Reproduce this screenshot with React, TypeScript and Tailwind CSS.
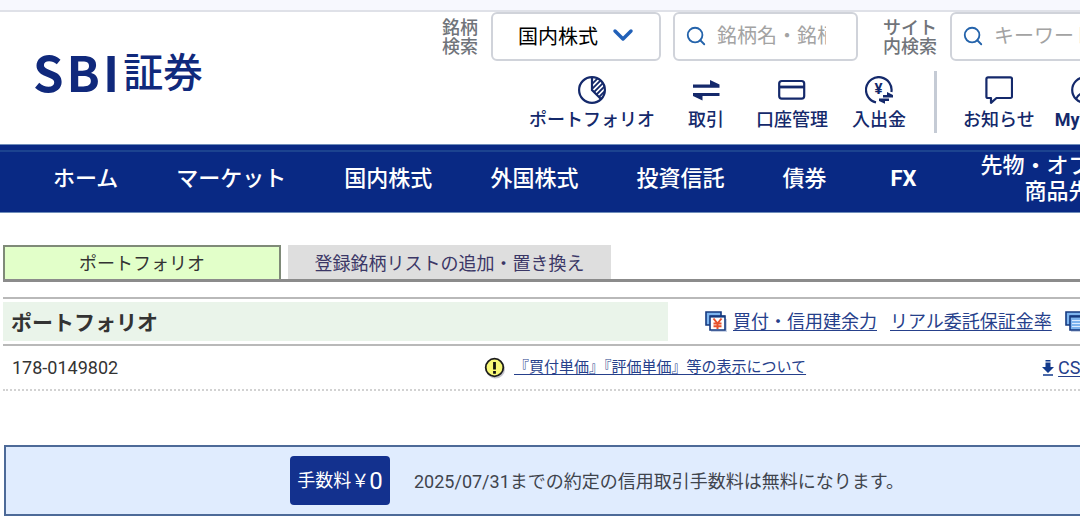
import type { ReactNode } from 'react'
import { ChevronDown, Search } from 'lucide-react'

function PieIcon() {
  return (
    <svg className="size-7" viewBox="0 0 28 28" fill="none" stroke="currentColor" strokeWidth="2.2">
      <clipPath id="wedge">
        <path d="M14 14V1a13 13 0 0 1 9.2 22.2z" />
      </clipPath>
      <circle cx="14" cy="14" r="12.9" />
      <path d="M14 1v13l9.2 9.2" />
      <g clipPath="url(#wedge)" strokeWidth="1.8">
        <path d="M12 10 23-1M12 15 26 1M14 18 30 2M17 20 31 6M19 23 33 9" />
      </g>
    </svg>
  )
}

function TradeIcon() {
  return (
    <svg className="size-7" viewBox="0 0 28 28" fill="currentColor">
      <path d="M1 8.500h17V4l9.500 4.500v3.200H1z" />
      <path d="M27.500 20.100h-17v4.500L1 20.100v-3.200h26.500z" />
    </svg>
  )
}

function CardIcon() {
  return (
    <svg className="size-7" viewBox="0 0 28 28" fill="none" stroke="currentColor" strokeWidth="2.2">
      <rect x="1.2" y="5" width="25" height="17.6" rx="2.6" />
      <path d="M1 11h25" strokeWidth="2.8" />
    </svg>
  )
}

function CashIcon() {
  return (
    <svg className="size-7" viewBox="0 0 28 28" fill="none" stroke="currentColor" strokeWidth="2.2">
      <path d="M26.4 16A12.8 12.8 0 1 0 11 26.4" />
      <text
        x="13.6"
        y="18.4"
        textAnchor="middle"
        fontSize="15"
        fontWeight="700"
        fill="currentColor"
        stroke="none"
      >
        ¥
      </text>
      <path d="M18 19h4v-3l6 3v2.400H18zM24 25h-4v2.800L14 25v-2.400h10z" fill="currentColor" stroke="none" />
    </svg>
  )
}

function MessageIcon() {
  return (
    <svg className="size-7" viewBox="0 0 28 28" fill="none" stroke="currentColor" strokeWidth="2.2" strokeLinejoin="round">
      <path d="M3 1.400h22.400a1.600 1.600 0 0 1 1.600 1.600v17.400a1.600 1.600 0 0 1-1.600 1.600H11.500L6 26.800V22H3a1.600 1.600 0 0 1-1.600-1.600V3A1.600 1.600 0 0 1 3 1.400z" />
    </svg>
  )
}

function UserIcon() {
  return (
    <svg className="size-7" viewBox="0 0 28 28" fill="none" stroke="currentColor" strokeWidth="2.2">
      <circle cx="14" cy="14" r="12.800" />
      <circle cx="16" cy="10.500" r="4.500" />
      <path d="M5 23c2-5 6-6.500 11-6.500 3 0 6 1.500 7 6.500" />
    </svg>
  )
}

function WindowsIcon({ yen = false }: { yen?: boolean }) {
  return (
    <svg className="size-[22px] shrink-0" viewBox="0 0 22 22">
      <path d="M6 8h16v13H6z" fill="#c9d3e6" />
      <path d="M1 1h15v13H1z" fill="#7db4ee" stroke="#15397f" strokeWidth="1.6" />
      <path d="M5 5h15v14H5z" fill={yen ? '#fff' : '#7db4ee'} stroke="#15397f" strokeWidth="1.6" />
      <path d="M5 5.600h15" stroke="#15397f" strokeWidth="2" />
      {yen ? (
        <path d="m8.500 7.500 4 5 4-5M12.500 12v6M8.500 12.500h8M8.500 15.300h8" fill="none" stroke="#e8512b" strokeWidth="2" />
      ) : (
        <path d="M7 9.500h11M7 12.500h11M7 15.500h11" stroke="#dcecff" strokeWidth="1.200" />
      )}
    </svg>
  )
}

function CautionIcon() {
  return (
    <svg className="size-[22px] shrink-0" viewBox="0 0 22 22">
      <circle cx="11.500" cy="12" r="9.500" fill="#c4c4cc" />
      <circle cx="10.500" cy="10.500" r="8.800" fill="#f8f878" stroke="#1c1c1c" strokeWidth="1.800" />
      <path d="M10.500 5v7.500M10.500 14v2.800" stroke="#111" strokeWidth="2.800" />
    </svg>
  )
}

function DownloadIcon() {
  return (
    <svg className="h-4 w-3 shrink-0" viewBox="0 0 12 16" fill="#123a8c">
      <path d="M3.500 0h5v1.500h-5zM3.500 2.500h5V7H12l-6 6-6-6h3.500zM1 14.200h10v1.500H1z" />
    </svg>
  )
}

const tools: { label: ReactNode; icon: ReactNode; space: string }[] = [
  { label: 'ポートフォリオ', icon: <PieIcon />, space: 'ml-[87px]' },
  { label: '取引', icon: <TradeIcon />, space: 'ml-[33px]' },
  { label: '口座管理', icon: <CardIcon />, space: 'ml-8' },
  { label: '入出金', icon: <CashIcon />, space: 'ml-6' },
]

const userTools: { label: ReactNode; icon: ReactNode; space: string }[] = [
  { label: 'お知らせ', icon: <MessageIcon />, space: 'ml-[26px]' },
  { label: <><b>My</b>設定</>, icon: <UserIcon />, space: 'ml-5' },
]

const menu = ['ホーム', 'マーケット', '国内株式', '外国株式', '投資信託', '債券']

function Tool({ label, icon, space }: { label: ReactNode; icon: ReactNode; space: string }) {
  return (
    <a href="#" className={`flex shrink-0 flex-col items-center gap-1 pt-[5px] text-[#14296b] ${space}`}>
      {icon}
      <span className="text-[18px] leading-6 font-medium">{label}</span>
    </a>
  )
}

function Header() {
  return (
    <header className="flex h-[132px]">
      <a
        href="#"
        className="flex w-[442px] shrink-0 items-center pb-4 pl-[33px] font-['Noto_Sans_CJK_JP',sans-serif] leading-none font-bold text-[#10297c]"
      >
        <span className="flex gap-[3px] text-[49px] leading-none">
          <span>S</span>
          <span>B</span>
          <span>I</span>
        </span>
        <span className="ml-1 text-[40px] leading-none font-medium">証券</span>
      </a>

      <div className="shrink-0">
        <div className="flex h-[49px] items-center">
          <label htmlFor="stock-type" className="text-[18px] leading-[19px] font-medium text-[#70747a]">
            銘柄
            <br />
            検索
          </label>
          <div className="relative ml-[13px]">
            <select
              id="stock-type"
              className="h-[49px] w-[170px] appearance-none rounded-md border-2 border-[#d0d3da] bg-white pl-[25px] text-[20px] text-black"
            >
              <option>国内株式</option>
            </select>
            <ChevronDown className="pointer-events-none absolute top-[7px] right-[22px] size-8 text-[#2160b8]" strokeWidth={2.6} />
          </div>
          <div className="ml-3 flex h-[49px] w-[185px] items-center rounded-md border-2 border-[#d0d3da] pb-0.5 pl-2.5">
            <Search className="size-[22px] shrink-0 text-[#2463ab]" strokeWidth={2} />
            <input
              type="text"
              aria-label="銘柄名・銘柄コード"
              placeholder="銘柄名・銘柄コード"
              className="ml-2.5 w-[109px] text-[20px] outline-none placeholder:text-[#a3a3a3]"
            />
          </div>
          <label htmlFor="site-search" className="ml-[25px] text-[18px] leading-[19px] font-medium text-[#70747a]">
            サイト
            <br />
            内検索
          </label>
          <div className="ml-[13px] flex h-[49px] w-[220px] items-center rounded-md border-2 border-[#d0d3da] pb-0.5 pl-2.5">
            <Search className="size-[22px] shrink-0 text-[#2463ab]" strokeWidth={2} />
            <input
              id="site-search"
              type="text"
              placeholder="キーワード"
              className="ml-2.5 w-[140px] text-[20px] outline-none placeholder:text-[#a3a3a3]"
            />
          </div>
        </div>

        <div className="mt-2.5 flex items-start">
          {tools.map((t, i) => (
            <Tool key={i} {...t} />
          ))}
          <div className="ml-7 h-[62px] w-[3px] bg-[#c5cbd5]" />
          {userTools.map((t, i) => (
            <Tool key={i} {...t} />
          ))}
        </div>
      </div>
    </header>
  )
}

function MainMenu() {
  return (
    <nav className="border-y border-[#6f8dba] bg-[#092984] pt-[5px]">
      <div className="h-0.5 bg-[#1c4390]" />
      <div className="flex h-[60px] items-center gap-[58px] pb-1.5 pl-[53px] text-[22px] leading-[26px] font-medium text-white">
        {menu.map((item) => (
          <a key={item} href="#" className="shrink-0">
            {item}
          </a>
        ))}
        <a href="#" className="mx-1.5 shrink-0 font-bold">
          FX
        </a>
        <a href="#" className="shrink-0 text-center">
          先物・オプション
          <br />
          商品先物
        </a>
      </div>
    </nav>
  )
}

function Tabs() {
  return (
    <div className="mt-8 ml-[3px] flex items-end gap-[7px] border-b-[3px] border-[#8b8b8b] text-[18px]">
      <button
        type="button"
        className="h-[34px] w-[278px] shrink-0 border-x-2 border-t-2 border-[#7f8a78] bg-[#e2ffc9] text-[#333]"
      >
        ポートフォリオ
      </button>
      <button type="button" className="h-[34px] w-[323px] shrink-0 bg-[#dedede] pt-0.5 text-[#3b3766]">
        登録銘柄リストの追加・置き換え
      </button>
    </div>
  )
}

function Portfolio() {
  return (
    <section className="ml-[3px]">
      <div className="mt-[15px] flex items-center border-y-2 border-[#b9b9b9] py-[3px] whitespace-nowrap">
        <h1 className="flex h-[39px] w-[665px] shrink-0 items-center bg-[#eaf4ea] pt-1 pl-2 text-[21px] font-bold text-[#333]">
          ポートフォリオ
        </h1>
        <div className="ml-[37px] flex shrink-0 items-center text-[18px] text-[#26408b]">
          <WindowsIcon yen />
          <a href="#" className="ml-1.5 underline underline-offset-2">
            買付・信用建余力
          </a>
          <a href="#" className="mx-[13px] underline underline-offset-2">
            リアル委託保証金率
          </a>
          <WindowsIcon />
        </div>
      </div>

      <div className="flex h-[45px] items-center border-b-2 border-dotted border-[#d2d2d2] whitespace-nowrap">
        <span className="w-[481px] shrink-0 pl-[9px] text-[18px] text-[#333]">178-0149802</span>
        <CautionIcon />
        <a href="#" className="ml-2 shrink-0 text-[15px] text-[#26408b] underline underline-offset-2">
          『買付単価』『評価単価』等の表示について
        </a>
        <div className="ml-[236px] flex shrink-0 items-center gap-1">
          <DownloadIcon />
          <a href="#" className="text-[18px] text-[#26408b] underline underline-offset-2">
            CSVダウンロード
          </a>
        </div>
      </div>
    </section>
  )
}

function FeeBanner() {
  return (
    <div className="mt-[54px] ml-1 flex h-[71px] items-center border-y-2 border-l-2 border-[#4d6a98] bg-[#e0ecfe] pl-[284px] whitespace-nowrap">
      <strong className="flex h-[49px] w-[100px] shrink-0 items-center justify-center rounded bg-[#13318e] text-[18px] font-normal text-white">
        手数料￥<span className="text-[24px]">0</span>
      </strong>
      <p className="ml-6 pt-0.5 text-[18px] text-[#3f444d]">2025/07/31までの約定の信用取引手数料は無料になります。</p>
    </div>
  )
}

export default function App() {
  return (
    <div className="min-h-screen overflow-hidden bg-white font-[Roboto,'Noto_Sans_CJK_JP',sans-serif]">
      <div className="h-3 border-b-2 border-[#dfe1e8] bg-[#f7f8fe]" />
      <Header />
      <MainMenu />
      <Tabs />
      <Portfolio />
      <FeeBanner />
    </div>
  )
}
